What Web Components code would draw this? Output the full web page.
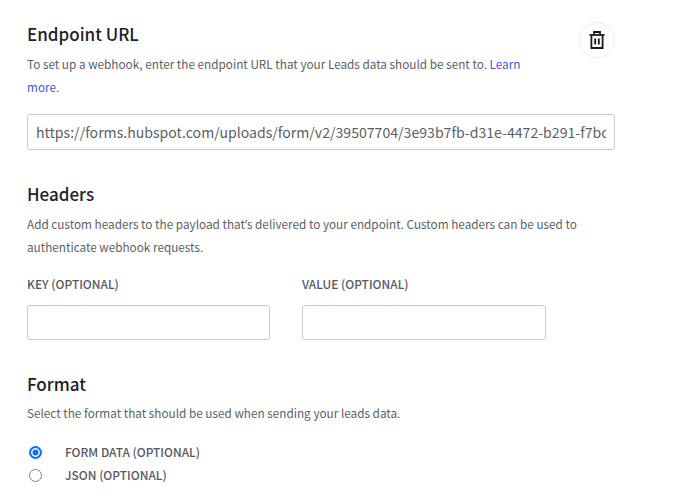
<!DOCTYPE html>
<html>
<head>
<meta charset="utf-8">
<style>
  html, body { margin: 0; background: #fff; }
  body { font-family: "Noto Sans CJK SC", "Noto Sans", sans-serif; overflow: hidden; }
</style>
</head>
<body>
<webhook-form>
  <form-section heading="Endpoint URL" desc-width="500px">
    <icon-button slot="action"></icon-button>
    <span slot="desc">To set up a webhook, enter the endpoint URL that your Leads data should be sent to. <a-link>Learn more</a-link>.</span>
    <text-field value="https://forms.hubspot.com/uploads/form/v2/39507704/3e93b7fb-d31e-4472-b291-f7bc"></text-field>
  </form-section>
  <form-section heading="Headers">
    <span slot="desc">Add custom headers to the payload that<span style="font-family: 'Noto Sans'">’</span>s delivered to your endpoint. Custom headers can be used to authenticate webhook requests.</span>
    <field-row>
      <text-field label="KEY (OPTIONAL)"></text-field>
      <text-field label="VALUE (OPTIONAL)"></text-field>
    </field-row>
  </form-section>
  <form-section heading="Format" desc-top="6px">
    <span slot="desc">Select the format that should be used when sending your leads data.</span>
    <radio-option checked>FORM DATA (OPTIONAL)</radio-option>
    <radio-option>JSON (OPTIONAL)</radio-option>
  </form-section>
</webhook-form>
<script>
class WebhookForm extends HTMLElement {
  connectedCallback() {
    this.attachShadow({ mode: 'open' });
    this.shadowRoot.innerHTML = `
      <style>
        :host {
          display: flex;
          flex-direction: column;
          gap: 32px;
          width: 588px;
          padding: 22px 0 0 27px;
        }
      </style>
      <slot></slot>
    `;
  }
}
customElements.define('webhook-form', WebhookForm);

class FormSection extends HTMLElement {
  connectedCallback() {
    this.attachShadow({ mode: 'open' });
    this.shadowRoot.innerHTML = `
      <style>
        :host { display: block; position: relative; }
        h2 {
          margin: 0;
          font-size: 17px;
          line-height: 24px;
          font-weight: 500;
          color: #1d2129;
        }
        p {
          margin: ${this.getAttribute('desc-top') || '7px'} 0 0;
          max-width: ${this.getAttribute('desc-width') || '100%'};
          font-size: 11.75px;
          line-height: 22.5px;
          color: #5a5f66;
        }
        .body { margin-top: 16px; }
        .action { position: absolute; top: 0; right: 0; }
      </style>
      <h2>${this.getAttribute('heading')}</h2>
      <p><slot name="desc"></slot></p>
      <div class="body"><slot></slot></div>
      <div class="action"><slot name="action"></slot></div>
    `;
  }
}
customElements.define('form-section', FormSection);

class ALink extends HTMLElement {
  connectedCallback() {
    this.attachShadow({ mode: 'open' });
    this.shadowRoot.innerHTML = `<style>:host { color: #3f5bd0; }</style><slot></slot>`;
  }
}
customElements.define('a-link', ALink);

class IconButton extends HTMLElement {
  connectedCallback() {
    this.attachShadow({ mode: 'open' });
    this.shadowRoot.innerHTML = `
      <style>
        :host {
          display: flex;
          align-items: center;
          justify-content: center;
          width: 34px;
          height: 34px;
          border: 1px solid #ececec;
          border-radius: 50%;
        }
        svg { display: block; }
      </style>
      <svg width="16" height="18" viewBox="0 0 16 18" fill="none" stroke="#1a1a1a" stroke-width="1.8">
        <path d="M0.5 4h15"/>
        <path d="M5 3.6V1h6v2.6"/>
        <path d="M2.4 4v13h11.2V4"/>
        <path d="M6.2 7.5v6M9.8 7.5v6"/>
      </svg>
    `;
  }
}
customElements.define('icon-button', IconButton);

class TextField extends HTMLElement {
  connectedCallback() {
    const label = this.getAttribute('label');
    this.attachShadow({ mode: 'open' });
    this.shadowRoot.innerHTML = `
      <style>
        :host { display: block; }
        label {
          display: block;
          margin-bottom: 11px;
          font-size: 11.9px;
          line-height: 20px;
          font-weight: 500;
          color: #55595f;
        }
        .box {
          box-sizing: border-box;
          height: ${label ? 35 : 36}px;
          padding: 0 8px;
          border: 1px solid #c9c9c9;
          border-radius: 3px;
          font-size: 14.1px;
          line-height: 34px;
          color: #5a5f66;
          white-space: nowrap;
        }
        .clip { overflow: hidden; }
      </style>
      ${label ? `<label>${label}</label>` : ''}
      <div class="box"><div class="clip">${this.getAttribute('value') || ''}</div></div>
    `;
  }
}
customElements.define('text-field', TextField);

class FieldRow extends HTMLElement {
  connectedCallback() {
    this.attachShadow({ mode: 'open' });
    this.shadowRoot.innerHTML = `
      <style>
        :host { display: grid; grid-template-columns: 243px 244px; gap: 32px; }
      </style>
      <slot></slot>
    `;
  }
}
customElements.define('field-row', FieldRow);

class RadioOption extends HTMLElement {
  connectedCallback() {
    const on = this.hasAttribute('checked');
    this.attachShadow({ mode: 'open' });
    this.shadowRoot.innerHTML = `
      <style>
        :host {
          display: flex;
          align-items: center;
          gap: 23px;
          height: 23px;
          padding-left: 2px;
          font-size: 11.9px;
          font-weight: 500;
          color: #55595f;
        }
        .text { margin-bottom: 2px; }
        .dot {
          box-sizing: border-box;
          width: 13px;
          height: 13px;
          border-radius: 50%;
          border: 1.5px solid #808080;
        }
        .dot.on {
          border: 2px solid #0a75f0;
          background: #0a75f0;
          box-shadow: inset 0 0 0 1.5px #fff;
        }
      </style>
      <span class="dot ${on ? 'on' : ''}"></span>
      <span class="text"><slot></slot></span>
    `;
  }
}
customElements.define('radio-option', RadioOption);
</script>
</body>
</html>
